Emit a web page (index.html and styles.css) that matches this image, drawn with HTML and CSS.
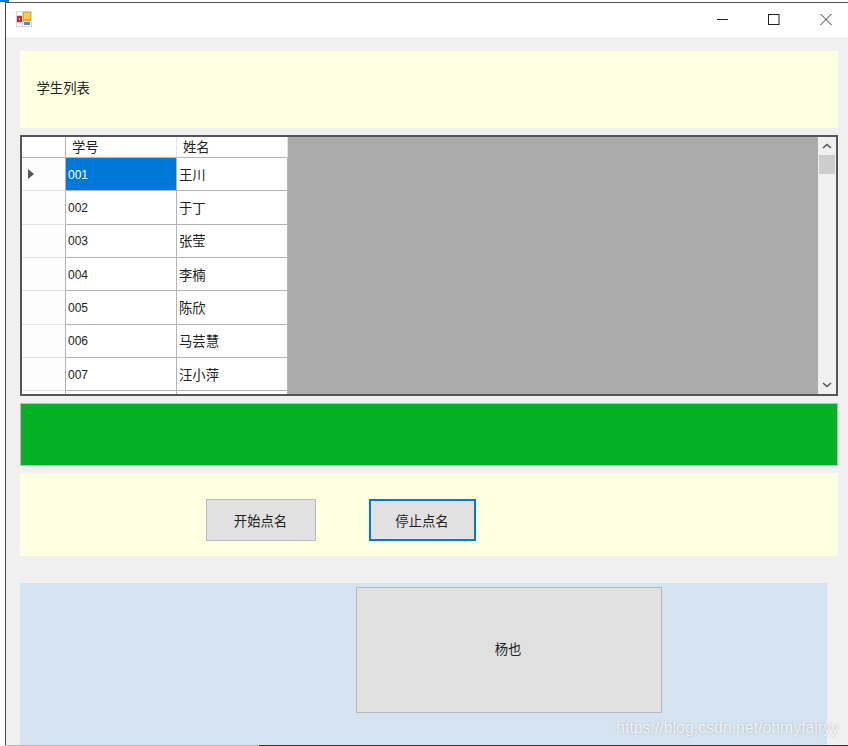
FILE: index.html
```html
<!DOCTYPE html>
<html lang="zh">
<head>
<meta charset="utf-8">
<title>点名</title>
<link rel="stylesheet" href="styles.css">
</head>
<body>
<div class="corner"></div>
<div class="window">
  <header class="titlebar">
    <svg class="app-icon" width="16" height="16" viewBox="0 0 16 16">
      <rect x="0" y="0" width="16" height="16" fill="#d8d8d8"/>
      <rect x="1" y="1" width="5" height="3" fill="#fff"/>
      <rect x="1" y="5" width="5" height="6" fill="#c42b2b"/>
      <rect x="3" y="7" width="1" height="2" fill="#f5d0d0"/>
      <rect x="1" y="12" width="5" height="3" fill="#fff"/>
      <rect x="7" y="1" width="8" height="9" fill="#e8a810"/>
      <rect x="8" y="2" width="6" height="6" fill="#fbcf4a"/>
      <rect x="7" y="11" width="8" height="4" fill="#fff"/>
      <rect x="8" y="11" width="6" height="3" fill="#4a86d8"/>
    </svg>
    <div class="win-buttons">
      <svg width="12" height="12" viewBox="0 0 12 12"><path d="M1 6.5H12" stroke="#222" fill="none"/></svg>
      <svg width="12" height="12" viewBox="0 0 12 12"><rect x="0.5" y="1.5" width="10.5" height="10" stroke="#222" fill="none"/></svg>
      <svg width="12" height="12" viewBox="0 0 12 12"><path d="M0.5 1L11.5 12M11.5 1L0.5 12" stroke="#333" fill="none"/></svg>
    </div>
  </header>
  <main class="client">
    <section class="panel-title">学生列表</section>
    <section class="grid">
      <div class="grid-body">
        <div class="table">
          <div class="row head"><div class="cell rowhead"></div><div class="cell">学号</div><div class="cell">姓名</div></div>
          <div class="row"><div class="cell rowhead"><span class="arrow"></span></div><div class="cell id selected">001</div><div class="cell">王川</div></div>
          <div class="row"><div class="cell rowhead"></div><div class="cell id">002</div><div class="cell">于丁</div></div>
          <div class="row"><div class="cell rowhead"></div><div class="cell id">003</div><div class="cell">张莹</div></div>
          <div class="row"><div class="cell rowhead"></div><div class="cell id">004</div><div class="cell">李楠</div></div>
          <div class="row"><div class="cell rowhead"></div><div class="cell id">005</div><div class="cell">陈欣</div></div>
          <div class="row"><div class="cell rowhead"></div><div class="cell id">006</div><div class="cell">马芸慧</div></div>
          <div class="row"><div class="cell rowhead"></div><div class="cell id">007</div><div class="cell">汪小萍</div></div>
          <div class="row"><div class="cell rowhead"></div><div class="cell id"></div><div class="cell"></div></div>
        </div>
      </div>
      <div class="scrollbar">
        <svg class="chev-up" width="10" height="6" viewBox="0 0 10 6"><path d="M1 5L5 1.5L9 5" stroke="#555" stroke-width="1.6" fill="none"/></svg>
        <div class="thumb"></div>
        <svg class="chev-down" width="10" height="6" viewBox="0 0 10 6"><path d="M1 1L5 4.5L9 1" stroke="#555" stroke-width="1.6" fill="none"/></svg>
      </div>
    </section>
    <section class="progress"></section>
    <section class="panel-actions">
      <button class="btn btn-start">开始点名</button>
      <button class="btn btn-stop">停止点名</button>
    </section>
    <section class="panel-result">
      <div class="name-box">杨也</div>
    </section>
  </main>
  <div class="watermark">https://blog.csdn.net/ohmyfairyy</div>
</div>
<div class="bottom-line"></div>
</body>
</html>
```

FILE: styles.css
```css
* { box-sizing: border-box; }
html, body { margin: 0; padding: 0; }
body {
  position: relative;
  width: 848px;
  height: 746px;
  overflow: hidden;
  background: #fff;
  padding: 2px 0 0 5px;
  font-family: "Noto Sans CJK SC", "Liberation Sans", sans-serif;
  font-size: 13.33px;
  color: #222;
}
.corner {
  position: absolute;
  left: 0;
  top: 0;
  width: 9px;
  height: 2px;
  background: #0078d7;
}
.window {
  position: relative;
  height: 743px;
  border-top: 1px solid #555;
  border-left: 1px solid #444;
  display: flex;
  flex-direction: column;
}
.titlebar {
  height: 34px;
  flex: none;
  background: #fff;
  display: flex;
  align-items: center;
  justify-content: space-between;
  padding: 0 16px 2px 10px;
}
.win-buttons {
  display: flex;
  gap: 40px;
  align-items: center;
}
.client {
  flex: 1;
  background: #f0f0f0;
  padding: 14px 10px 0 14px;
  display: flex;
  flex-direction: column;
}
.panel-title {
  height: 77px;
  background: #ffffe1;
  padding: 0 0 4px 16.5px;
  display: flex;
  align-items: center;
  color: #222;
}
.grid {
  margin-top: 7px;
  height: 261px;
  border: 2px solid #555;
  background: #ababab;
  display: flex;
}
.grid-body {
  flex: 1;
  overflow: hidden;
}
.table {
  width: 266px;
  background: #fff;
}
.row {
  display: grid;
  grid-template-columns: 44px 111px 111px;
  height: 33.33px;
}
.row.head {
  height: 21px;
}
.cell {
  display: flex;
  align-items: center;
  padding-left: 2px;
  border-right: 1px solid #b4b4b4;
  border-bottom: 1px solid #b4b4b4;
  white-space: nowrap;
  overflow: hidden;
}
.head .cell {
  padding-left: 6px;
  padding-bottom: 1px;
  border-right-color: #e4e4e4;
}
.head .rowhead { border-right-color: #b4b4b4; }
.cell.rowhead {
  background: #fdfdfd;
  padding-left: 6px;
  border-bottom-color: #e2e2e2;
}
.head .cell.rowhead {
  background: #fff;
  border-bottom-color: #b4b4b4;
}
.cell.id {
  font-family: "Liberation Sans", sans-serif;
  font-size: 12px;
  padding-top: 1px;
}
.cell.selected {
  background: #0078d7;
  color: #fff;
}
.arrow {
  display: block;
  width: 0;
  height: 0;
  border-left: 6px solid #555;
  border-top: 5px solid transparent;
  border-bottom: 5px solid transparent;
}
.scrollbar {
  width: 18px;
  flex: none;
  background: #f0f0f0;
  display: flex;
  flex-direction: column;
  align-items: center;
}
.chev-up { margin-top: 6px; flex: none; }
.thumb {
  width: 16px;
  height: 19px;
  margin-top: 6px;
  background: #cdcdcd;
  flex: none;
}
.chev-down { margin-top: auto; margin-bottom: 6px; flex: none; }
.progress {
  margin-top: 7px;
  height: 63px;
  flex: none;
  background: #06b025;
  border: 1px solid #bcbcbc;
}
.panel-actions {
  margin-top: 7px;
  height: 83px;
  flex: none;
  background: #ffffe1;
  display: flex;
  align-items: flex-start;
  padding: 26px 0 0 186px;
  gap: 53px;
}
.btn {
  font: inherit;
  color: #222;
  background: #e1e1e1;
  border: 1px solid #b8b8b8;
  height: 42px;
  width: 110px;
  padding: 0 1px 0 0;
}
.btn-stop {
  width: 107px;
  border: 2px solid #0078d7;
}
.panel-result {
  margin-top: 27px;
  width: 807px;
  flex: 1;
  background: #d6e4f2;
  padding: 4px 0 0 336px;
}
.name-box {
  width: 306px;
  height: 126px;
  background: #e1e1e1;
  border: 1px solid #b8b8b8;
  display: flex;
  align-items: center;
  justify-content: center;
  padding: 0 2px 4px 0;
}
.watermark {
  position: absolute;
  right: 9px;
  bottom: 8px;
  font-family: "Liberation Sans", sans-serif;
  font-size: 15.85px;
  color: rgba(255, 255, 255, 0.8);
  text-shadow: 0 0 2px rgba(150, 150, 150, 0.7);
}
.bottom-line {
  height: 1px;
  background: linear-gradient(to right, #b8b8b8 254px, #333 254px);
}
```
